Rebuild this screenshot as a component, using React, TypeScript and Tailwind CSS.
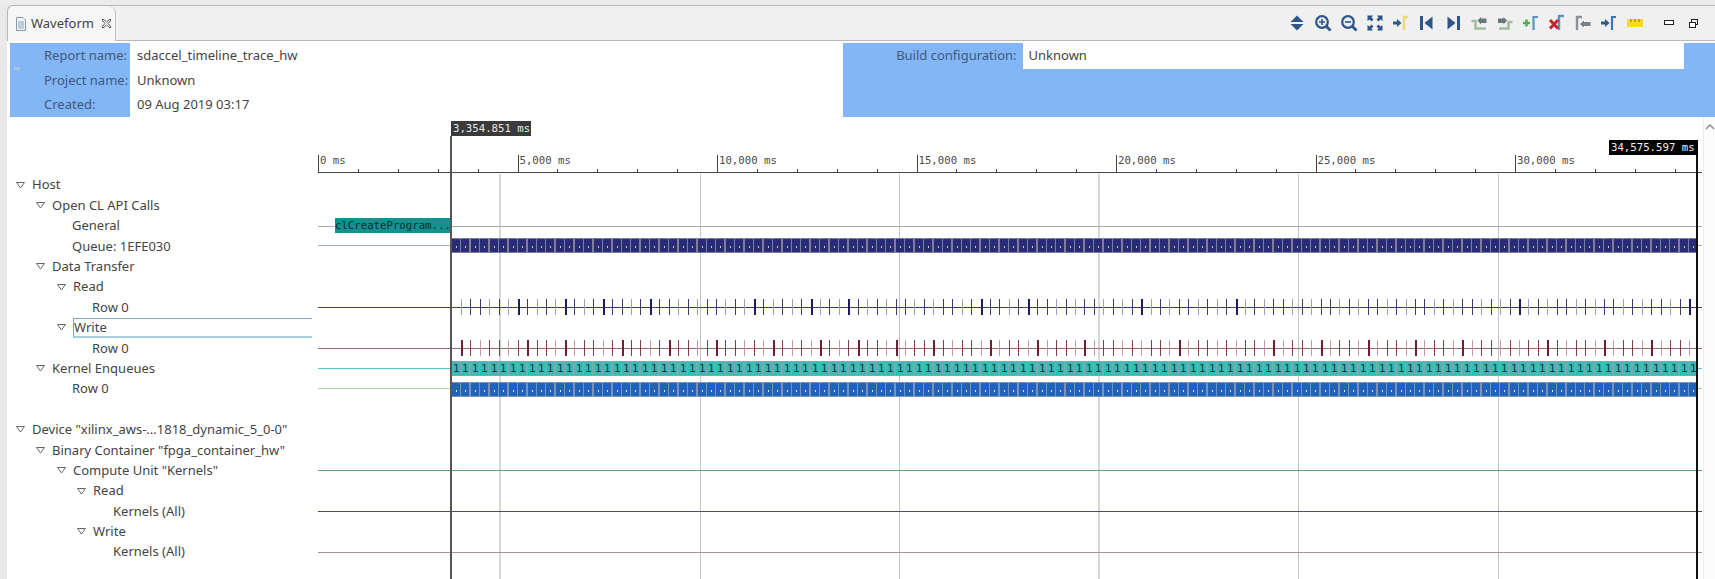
import type { ReactNode } from "react";

const uiFont = { fontFamily: '"Noto Sans", "Open Sans", sans-serif' };

type TreeRow = { label: string; level: number; open?: boolean; selected?: boolean };

const treeRows: (TreeRow | null)[] = [
  { label: "Host", level: 0, open: true },
  { label: "Open CL API Calls", level: 1, open: true },
  { label: "General", level: 2 },
  { label: "Queue: 1EFE030", level: 2 },
  { label: "Data Transfer", level: 1, open: true },
  { label: "Read", level: 2, open: true },
  { label: "Row 0", level: 3 },
  { label: "Write", level: 2, open: true, selected: true },
  { label: "Row 0", level: 3 },
  { label: "Kernel Enqueues", level: 1, open: true },
  { label: "Row 0", level: 2 },
  null,
  { label: 'Device "xilinx_aws-...1818_dynamic_5_0-0"', level: 0, open: true },
  { label: 'Binary Container "fpga_container_hw"', level: 1, open: true },
  { label: 'Compute Unit "Kernels"', level: 2, open: true },
  { label: "Read", level: 3, open: true },
  { label: "Kernels (All)", level: 4 },
  { label: "Write", level: 3, open: true },
  { label: "Kernels (All)", level: 4 },
];

const levelPadding = ["pl-[9px]", "pl-[29px]", "pl-[50px]", "pl-[70px]", "pl-[91px]"];

const Icon = ({ children }: { children: ReactNode }) => (
  <div className="flex w-[26px] justify-center">
    <svg width="18" height="18" viewBox="0 0 18 18">
      {children}
    </svg>
  </div>
);

const navy = "#2f5688";

const toolbar: ReactNode[] = [
  <>
    <path d="M9 1.5 L15.5 8 H2.5 Z" fill={navy} />
    <path d="M9 16.5 L15.5 10 H2.5 Z" fill={navy} />
  </>,
  <>
    <circle cx="8" cy="8" r="5.8" fill="#e8eef6" stroke={navy} strokeWidth="2.2" />
    <path d="M12 12 L16.5 16.5" stroke={navy} strokeWidth="2.8" />
    <path d="M5 8 H11 M8 5 V11" stroke={navy} strokeWidth="1.6" />
  </>,
  <>
    <circle cx="8" cy="8" r="5.8" fill="#e8eef6" stroke={navy} strokeWidth="2.2" />
    <path d="M12 12 L16.5 16.5" stroke={navy} strokeWidth="2.8" />
    <path d="M5 8 H11" stroke={navy} strokeWidth="1.6" />
  </>,
  <>
    <path d="M1.5 1.5 H7 L5.5 3.5 L7.5 5.5 L5.5 7.5 L3.5 5.5 L1.5 7 Z" fill={navy} />
    <path d="M16.5 1.5 H11 L12.5 3.5 L10.5 5.5 L12.5 7.5 L14.5 5.5 L16.5 7 Z" fill={navy} />
    <path d="M1.5 16.5 H7 L5.5 14.5 L7.5 12.5 L5.5 10.5 L3.5 12.5 L1.5 11 Z" fill={navy} />
    <path d="M16.5 16.5 H11 L12.5 14.5 L10.5 12.5 L12.5 10.5 L14.5 12.5 L16.5 11 Z" fill={navy} />
  </>,
  <>
    <path d="M1 7.5 H5 V5 L9.5 9 L5 13 V10.5 H1 Z" fill={navy} />
    <path d="M12 16 V3 H16" fill="none" stroke="#f0d878" strokeWidth="2.6" />
  </>,
  <>
    <path d="M3.5 2 V16" stroke={navy} strokeWidth="3" />
    <path d="M14.5 2.5 V15.5 L6.5 9 Z" fill={navy} />
  </>,
  <>
    <path d="M14.5 2 V16" stroke={navy} strokeWidth="3" />
    <path d="M3.5 2.5 V15.5 L11.5 9 Z" fill={navy} />
  </>,
  <>
    <path d="M1.5 7 H5.5 V14.5 H16" fill="none" stroke="#a4bca0" strokeWidth="2.6" />
    <path d="M7.5 6.5 L11 3 V4.5 H16.5 V9 H11 V10.5 Z" fill="#66767a" />
  </>,
  <>
    <path d="M16.5 8 H12.5 V14.5 H3" fill="none" stroke="#a4bca0" strokeWidth="2.6" />
    <path d="M11 6.5 L7.5 3 V4.5 H2 V9 H7.5 V10.5 Z" fill="#66767a" />
  </>,
  <>
    <path d="M1 9 H8 M4.5 5.5 V12.5" stroke="#4caf50" strokeWidth="2.4" />
    <path d="M11.5 16 V3 H16" fill="none" stroke="#5b93c4" strokeWidth="2.2" />
  </>,
  <>
    <path d="M11 16 V2 H16" fill="none" stroke="#5b93c4" strokeWidth="2.4" />
    <path d="M2 6 L10 14.5 M10 6 L2 14.5" stroke="#c8202c" strokeWidth="3" />
  </>,
  <>
    <path d="M3 16 V3 H8" fill="none" stroke="#8a9298" strokeWidth="2.4" />
    <path d="M6 10 L10 6.5 V8 H16.5 V12 H10 V13.5 Z" fill="#7a8288" />
  </>,
  <>
    <path d="M1 7.5 H5 V5 L9.5 9 L5 13 V10.5 H1 Z" fill={navy} />
    <path d="M12 16 V3 H16" fill="none" stroke="#3f78b0" strokeWidth="2.2" />
  </>,
];

const segments = Array.from({ length: 132 }, (_, i) => Math.round(451 + i * 9.445));
const ticks = Array.from({ length: 131 }, (_, i) => Math.round(461 + i * 9.446));
const toIndexes = (xs: number[]) => new Set(xs.map((x) => Math.round((x - 461) / 9.446)));
const boldRead = toIndexes([518, 565, 603, 651, 754, 811, 849, 982, 1029, 1142, 1235, 1518, 1688]);
const boldWrite = toIndexes([
  462, 528, 566, 623, 670, 717, 774, 821, 859, 897, 935, 992, 1039, 1086, 1180, 1274, 1321, 1368,
  1415, 1463, 1547, 1604, 1651,
]);
const minorTicks = Array.from({ length: 35 }, (_, i) => 318 + i * 39.9);
const majorLabels = ["0 ms", "5,000 ms", "10,000 ms", "15,000 ms", "20,000 ms", "25,000 ms", "30,000 ms"];
const gridLines = [
  { x: 499, w: 2, c: "#d8d8d8" },
  { x: 700, w: 1, c: "#c4c4c4" },
  { x: 899, w: 1, c: "#c4c4c4" },
  { x: 1098, w: 2, c: "#d8d8d8" },
  { x: 1298, w: 1, c: "#c4c4c4" },
  { x: 1498, w: 1, c: "#c4c4c4" },
];

const mono = { fontFamily: '"DejaVu Sans Mono", "Liberation Mono", monospace' };

const hLines = [
  { y: 226, color: "#a4acb2" },
  { y: 245, color: "#a4b4bc" },
  { y: 307, color: "#3a3a80" },
  { y: 348, color: "#a06a70" },
  { y: 368, color: "#5cc6ca" },
  { y: 388, color: "#a4d4a4" },
  { y: 470, color: "#5fa56f" },
  { y: 511, color: "#4a4a80" },
  { y: 552, color: "#a89494" },
];

const Timeline = () => (
  <svg
    width="1385"
    height="462"
    viewBox="318 117 1385 462"
    className="block"
    shapeRendering="crispEdges"
  >
    {gridLines.map((g) => (
      <rect key={g.x} x={g.x} y={174} width={g.w} height="405" fill={g.c} />
    ))}

    <rect x="318" y="172" width="1384" height="1" fill="#444" />
    {minorTicks.map((x, i) => (
      <rect
        key={x}
        x={Math.round(x)}
        y={i % 5 === 0 ? 155 : 169}
        width="1"
        height={i % 5 === 0 ? 17 : 3}
        fill="#444"
      />
    ))}
    {majorLabels.map((t, i) => (
      <text key={t} x={320 + i * 199.5} y="164" fontSize="10.7" fill="#4a4a4a" style={mono}>
        {t}
      </text>
    ))}

    {hLines.map((l) => (
      <rect key={l.y} x="318" y={l.y} width="1384" height="1" fill={l.color} />
    ))}

    <rect x="335" y="218" width="116" height="15" fill="#14908f" />
    <text x="335" y="229" fontSize="10.7" fill="#0d2c30" style={mono}>
      clCreateProgram...
    </text>

    {segments.map((x) => (
      <g key={x}>
        <rect x={x + 0.5} y="238.5" width="9" height="14" fill="#2a2c78" stroke="#7d7f98" />
        <rect x={x + 5} y="246" width="1" height="2" fill="#c8c8e4" />
        <rect x={x + 0.5} y="361.5" width="9" height="14" fill="#36bdb8" stroke="#7fa8a8" />
        <text x={x + 2} y="372" fontSize="10.7" fill="#0d3a40" style={mono}>
          1
        </text>
        <rect x={x + 0.5} y="382.5" width="9" height="14" fill="#2062bc" stroke="#7b93b8" />
        <rect x={x + 5} y="390" width="1" height="2" fill="#dce8f8" />
      </g>
    ))}

    {ticks.map((x, i) => (
      <g key={x}>
        <rect
          x={x}
          y="299"
          width={boldRead.has(i) ? 2 : 1}
          height="16"
          fill={boldRead.has(i) ? "#1c1c66" : (i * 7) % 5 < 2 ? "#9c9cc8" : "#3c3c84"}
        />
        <rect
          x={x}
          y="340"
          width={boldWrite.has(i) ? 2 : 1}
          height="16"
          fill={boldWrite.has(i) ? "#701c2c" : (i * 3) % 5 < 2 ? "#c89aa0" : "#8c3a48"}
        />
      </g>
    ))}

    <rect x="1698" y="230" width="5" height="170" fill="#fff" />
    {hLines.map((l) => (
      <rect key={l.y} x="1698" y={l.y} width="4" height="1" fill={l.color} />
    ))}

    <rect x="450" y="136" width="2" height="443" fill="#555" />
    <rect x="1696" y="155" width="2" height="424" fill="#111" />

    <rect x="451" y="121" width="80" height="15" fill="#3a3a3a" />
    <text x="453" y="132" fontSize="10.7" fill="#e8e8e8" style={mono}>
      3,354.851 ms
    </text>
    <rect x="1609" y="140" width="89" height="15" fill="#050505" />
    <text x="1611" y="151" fontSize="10.7" fill="#f0f0f0" style={mono}>
      34,575.597 ms
    </text>
  </svg>
);

const App = () => {
  return (
    <div
      className="flex h-[579px] w-[1715px] flex-col overflow-hidden bg-[#e9e9e9] text-[13px] text-[#444]"
      style={uiFont}
    >
      <div className="h-[5px] shrink-0 bg-[#ececec]" />

      <div className="ml-[7px] flex h-[36px] shrink-0 items-stretch rounded-tl-[6px] border-y border-l border-[#b8b8b8] bg-[#f0f0f0]">
        <div className="-mb-px flex w-[108px] items-center gap-[4px] rounded-t-[8px] border-r border-[#c0c0c0] bg-[#f6f6f6] pl-[7px]">
          <svg width="12" height="14" viewBox="0 0 12 14">
            <path d="M1.5 .5 H8 L10.5 3 V13.5 H1.5 Z" fill="#f2f6fa" stroke="#8a98a8" />
            <path d="M3 5 H9 M3 7 H9 M3 9 H9 M3 11 H9" stroke="#8aa0b8" />
          </svg>
          <span className="text-[13px] leading-none">Waveform</span>
          <svg width="11" height="11" viewBox="0 0 11 11" className="ml-[3px]">
            <path
              d="M1 2 L2 1 L5.5 4 L9 1 L10 2 L7 5.5 L10 9 L9 10 L5.5 7 L2 10 L1 9 L4 5.5 Z"
              fill="#fff"
              stroke="#555"
              strokeWidth="1"
            />
          </svg>
        </div>
        <div className="ml-auto flex items-center pr-[10px]">
          {toolbar.map((icon, i) => (
            <Icon key={i}>{icon}</Icon>
          ))}
          <div className="flex w-[26px] justify-center">
            <svg width="16" height="10" viewBox="0 0 16 10">
              <rect x="0" y="1" width="16" height="8" fill="#f6dc1c" />
              <path d="M4 1 V4 M8 1 V4 M12 1 V4" stroke="#8a7410" />
            </svg>
          </div>
          <div className="ml-[9px] flex w-[24px] justify-center">
            <svg width="10" height="6" viewBox="0 0 10 6">
              <rect x=".5" y=".5" width="9" height="4" fill="#fff" stroke="#222" />
            </svg>
          </div>
          <div className="flex w-[24px] justify-center">
            <svg width="9" height="9" viewBox="0 0 9 9">
              <rect x="2.5" y=".5" width="6" height="5" fill="none" stroke="#222" />
              <rect x=".5" y="3.5" width="6" height="5" fill="#fff" stroke="#222" />
            </svg>
          </div>
        </div>
      </div>

      <div className="ml-[7px] flex h-[76px] shrink-0 bg-white pl-[3px] pt-[2px]">
        <div className="relative flex w-[120px] flex-col bg-[#82b6f6] pl-[34px] text-[#41597a]">
          <span className="absolute left-[4px] top-[24px] h-[3px] w-[6px] bg-[#a8c4e0]" />
          <span className="flex h-[25px] items-center">Report name:</span>
          <span className="flex h-[25px] items-center">Project name:</span>
          <span className="flex h-[24px] items-center">Created:</span>
        </div>
        <div className="flex flex-col pl-[7px]">
          <span className="flex h-[25px] items-center">sdaccel_timeline_trace_hw</span>
          <span className="flex h-[25px] items-center">Unknown</span>
          <span className="flex h-[24px] items-center">09 Aug 2019 03:17</span>
        </div>
        <div className="ml-[545px] flex flex-1 items-start bg-[#82b6f6]">
          <span className="flex h-[25px] w-[180px] items-center justify-end pr-[6px] text-[#41597a]">
            Build configuration:
          </span>
          <span className="flex h-[26px] w-[661px] items-center bg-white pl-[6px]">Unknown</span>
        </div>
      </div>

      <div className="ml-[7px] flex min-h-0 flex-1 bg-white">
        <div className="w-[311px] shrink-0 pt-[58px]">
          {treeRows.map((row, i) =>
            row ? (
              <div key={i} className={`${levelPadding[row.level]} flex h-[20.4px] items-center`}>
                {row.open && (
                  <svg width="9" height="7" viewBox="0 0 9 7" className="mr-[7px] shrink-0">
                    <path d="M.5 .5 H8.5 L4.5 6 Z" fill="#fff" stroke="#666" />
                  </svg>
                )}
                <span
                  className={
                    row.selected
                      ? "flex h-[20px] w-[239px] items-center border border-r-0 border-[#7aa8c8] border-b-[#a8cce0] border-b-2"
                      : row.open
                        ? ""
                        : "pl-[15px]"
                  }
                >
                  {row.label}
                </span>
              </div>
            ) : (
              <div key={i} className="h-[20.4px]" />
            ),
          )}
        </div>
        <Timeline />
        <div className="flex w-[12px] shrink-0 justify-center border-l border-[#ececec] bg-[#fbfbfb] pt-[7px]">
          <svg width="10" height="6" viewBox="0 0 10 6">
            <path d="M1 5 L5 1 L9 5" fill="none" stroke="#888" strokeWidth="1.4" />
          </svg>
        </div>
      </div>
    </div>
  );
};

export default App;
